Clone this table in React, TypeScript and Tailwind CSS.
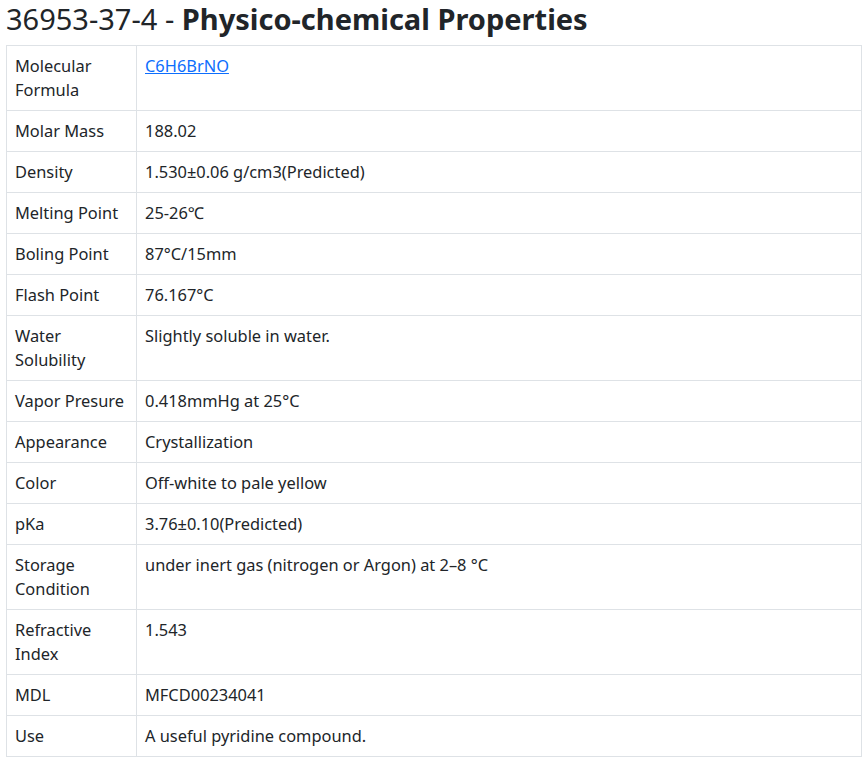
import React from "react";

const rows: { label: string; value: string; link?: boolean }[] = [
  { label: "Molecular Formula", value: "C6H6BrNO", link: true },
  { label: "Molar Mass", value: "188.02" },
  { label: "Density", value: "1.530±0.06 g/cm3(Predicted)" },
  { label: "Melting Point", value: "25-26℃" },
  { label: "Boling Point", value: "87°C/15mm" },
  { label: "Flash Point", value: "76.167°C" },
  { label: "Water Solubility", value: "Slightly soluble in water." },
  { label: "Vapor Presure", value: "0.418mmHg at 25°C" },
  { label: "Appearance", value: "Crystallization" },
  { label: "Color", value: "Off-white to pale yellow" },
  { label: "pKa", value: "3.76±0.10(Predicted)" },
  { label: "Storage Condition", value: "under inert gas (nitrogen or Argon) at 2–8 °C" },
  { label: "Refractive Index", value: "1.543" },
  { label: "MDL", value: "MFCD00234041" },
  { label: "Use", value: "A useful pyridine compound." },
];

export default function App() {
  return (
    <div
      className="bg-white text-[#212529] px-[6px]"
      style={{ fontFamily: "'Noto Sans', 'Open Sans', sans-serif" }}
    >
      <h2 className="text-[29px] leading-[38px] mb-[7px]">
        36953-37-4 - <span className="font-bold">Physico-chemical Properties</span>
      </h2>
      <table className="w-[856px] border-collapse text-[16.4px] leading-[24px]">
        <tbody>
          {rows.map((r) => (
            <tr key={r.label}>
              <td className="w-[130px] border border-[#dee2e6] px-[8px] py-[8px] align-top">
                {r.label}
              </td>
              <td className="border border-[#dee2e6] px-[8px] py-[8px] align-top">
                {r.link ? (
                  <a href="#" className="text-[#0d6efd] underline">
                    {r.value}
                  </a>
                ) : (
                  r.value
                )}
              </td>
            </tr>
          ))}
        </tbody>
      </table>
    </div>
  );
}
